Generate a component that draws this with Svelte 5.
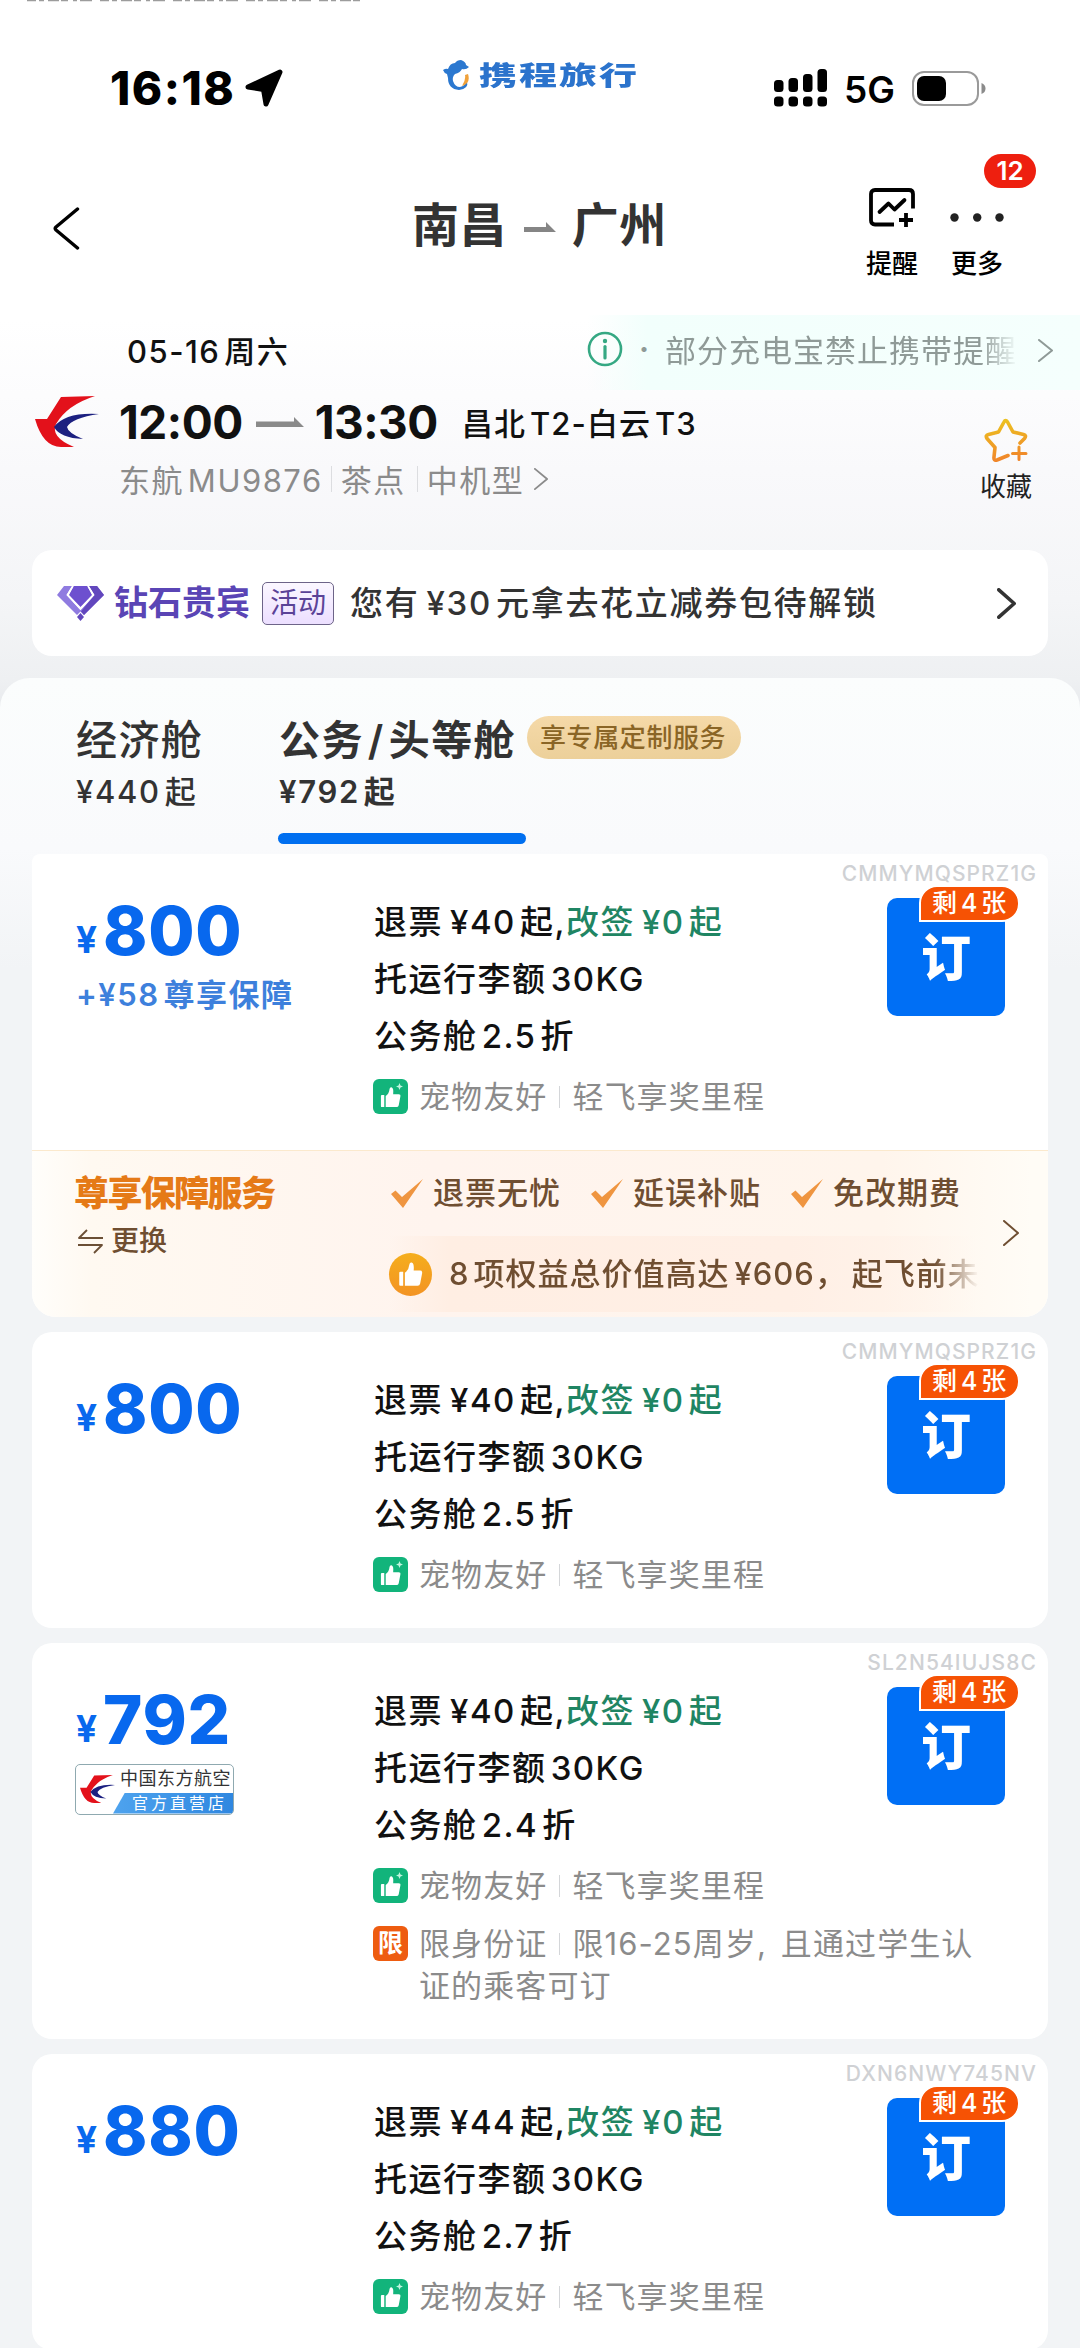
<script lang="ts">
  interface Fare {
    id: number;
    code: string;
    price: number;
    refund: number;
    discount: string;
    insured?: boolean;
    flagship?: boolean;
    restricted?: boolean;
  }

  const fares: Fare[] = [
    { id: 1, code: 'CMMYMQSPRZ1G', price: 800, refund: 40, discount: '2.5', insured: true },
    { id: 2, code: 'CMMYMQSPRZ1G', price: 800, refund: 40, discount: '2.5' },
    { id: 3, code: 'SL2N54IUJS8C', price: 792, refund: 40, discount: '2.4', flagship: true, restricted: true },
    { id: 4, code: 'DXN6NWY745NV', price: 880, refund: 44, discount: '2.7' },
  ];

  const cabins = [
    { key: 'economy', label: ['经济舱'], from: 440 },
    { key: 'business', label: ['公务', '头等舱'], from: 792, perk: '享专属定制服务' },
  ];

  const perks = ['退票无忧', '延误补贴', '免改期费'];

  let activeCabin = $state('business');
</script>

{#snippet chevron(w: number, h: number, stroke: number)}
  <svg width={w} height={h} viewBox="0 0 {w} {h}" fill="none" stroke="currentColor" stroke-width={stroke} stroke-linecap="round" stroke-linejoin="round">
    <path d="M{stroke / 2} {stroke / 2}L{w - stroke / 2} {h / 2}L{stroke / 2} {h - stroke / 2}" />
  </svg>
{/snippet}

{#snippet airline(w: number, h: number)}
  <svg width={w} height={h} viewBox="0 0 64 51">
    <path fill="#e3111b" d="M0 23H12L26 1L60 0Q32 9 21 28Q15 41 39 51H26Q8 51 0 23Z" />
    <path fill="#1c2080" d="M64 18Q30 16 19 31Q25 42 48 43Q33 37 32 31Q37 22 64 18Z" />
  </svg>
{/snippet}

{#snippet thumb(size: number)}
  <svg width={size} height={size} viewBox="0 0 24 24" fill="currentColor">
    <path d="M2 10.5Q2 9.500 3 9.500H5.500V22H3Q2 22 2 21ZM7 22V10.500Q10.500 8 11 3Q11.300 1 13 1.300Q15.500 2 14.800 8.500H20.500Q22.800 8.500 22.300 11L20.600 20Q20.200 22 18.300 22Z" />
  </svg>
{/snippet}

<div class="page">
  <svg class="cutoff" width="334" height="3" viewBox="0 0 334 3">
    <path d="M0 0.500H334" stroke="#9c9c9c" stroke-width="1.600" stroke-dasharray="9 3 5 4 11 2 7 5 4 3 12 8" />
  </svg>

  <div class="status">
    <div class="clock">
      16:18
      <svg width="38" height="38" viewBox="0 0 38 38">
        <path d="M35 3L21 35L18.500 20.500L3 18Z" fill="#000" stroke="#000" stroke-width="5" stroke-linejoin="round" />
      </svg>
    </div>
    <div class="brand">
      <svg width="27" height="30" viewBox="0 0 27 30">
        <path fill="#2b78d0" d="M0 10Q3 8 5 9Q7 3 12 3Q14 0 18 0Q23 2 23 5L26 7Q23 10 19 9Q17 13 12 14Q9 17 10 21Q12 27 17 27Q22 26 24 21Q26 29 16 30Q5 29 5 18L4 14Q1 13 0 10Z" />
        <path fill="#f0a13a" d="M25 14Q28 23 19 26Q23 20 22 15Z" />
      </svg>
      <span>携程旅行</span>
    </div>
    <div class="signal">
      <svg width="53" height="38" viewBox="0 0 53 38">
        <rect x="0" y="11" width="9.500" height="12" rx="3.500" />
        <rect x="14.500" y="9" width="9.500" height="14" rx="3.500" />
        <rect x="29" y="5" width="9.500" height="18" rx="3.500" />
        <rect x="43.500" y="0" width="9.500" height="23" rx="3.500" />
        <rect x="0" y="27.500" width="9.500" height="10" rx="3.500" />
        <rect x="14.500" y="27.500" width="9.500" height="10" rx="3.500" />
        <rect x="29" y="27.500" width="9.500" height="10" rx="3.500" />
        <rect x="43.500" y="27.500" width="9.500" height="10" rx="3.500" />
      </svg>
      <span>5G</span>
      <svg width="74" height="35" viewBox="0 0 74 35">
        <rect x="1" y="1" width="65" height="33" rx="11" fill="none" stroke="#9a9a9a" stroke-width="2" />
        <rect x="5" y="5" width="29" height="25" rx="7" />
        <path d="M69.500 12Q73.500 13.500 73.500 17.500T69.500 23Z" fill="#8b8b8b" />
      </svg>
    </div>
  </div>

  <div class="nav">
    <button class="back" aria-label="返回">
      <svg width="27" height="43" viewBox="0 0 27 43" fill="none" stroke="#000" stroke-width="3.400" stroke-linecap="round" stroke-linejoin="round">
        <path d="M24.500 2L3 20Q1.500 21.500 3 23L24.500 41" />
      </svg>
    </button>
    <div class="route">
      <span>南昌</span>
      <svg width="32" height="11" viewBox="0 0 32 11"><path d="M0 5H22V0L32 10H0Z" fill="#858585" /></svg>
      <span>广州</span>
    </div>
    <div class="actions">
      <button class="action">
        <svg width="46" height="40" viewBox="0 0 46 40" fill="none" stroke="#000" stroke-width="3.800">
          <path d="M25 36.500H6Q2 36.500 2 32.500V6Q2 2 6 2H40Q44 2 44 6V20.500" />
          <path d="M10.500 24L19.500 15.500L25.500 21.500L35.500 12" stroke-linecap="round" stroke-linejoin="round" />
          <path d="M37 25V39M30 32H44" />
        </svg>
        提醒
      </button>
      <button class="action">
        <svg width="54" height="40" viewBox="0 0 54 40" fill="#222">
          <circle cx="4.500" cy="29.500" r="4.200" />
          <circle cx="27.200" cy="29.500" r="4.200" />
          <circle cx="49.500" cy="29.500" r="4.200" />
        </svg>
        更多
        <span class="unread">12</span>
      </button>
    </div>
  </div>

  <div class="date-row">
    <span class="date">05-16周六</span>
    <div class="notice">
      <svg width="36" height="36" viewBox="0 0 36 36" fill="none" stroke="#35a883" stroke-width="2.600">
        <circle cx="18" cy="18" r="16" />
        <path d="M18 15.500V27" stroke-width="3.200" stroke-linecap="round" />
        <circle cx="18" cy="10" r="2.200" fill="#35a883" stroke="none" />
      </svg>
      <span class="bullet">·</span>
      <span class="notice-text">部分充电宝禁止携带提醒</span>
      {@render chevron(15, 23, 2)}
    </div>
  </div>

  <div class="flight">
    <div class="carrier">{@render airline(64, 51)}</div>
    <div class="flight-info">
      <div class="times">
        <b>12:00</b>
        <svg width="48" height="11" viewBox="0 0 48 11"><path d="M0 4.500H38V0L48 10H0Z" fill="#8a8a8a" /></svg>
        <b>13:30</b>
        <span class="airports">昌北T2-白云T3</span>
      </div>
      <div class="meta">
        <span>东航MU9876</span>
        <i></i>
        <span>茶点</span>
        <i></i>
        <span>中机型</span>
        {@render chevron(14, 22, 1.8)}
      </div>
    </div>
    <button class="favorite">
      <svg width="44" height="44" viewBox="0 0 44 44" fill="none" stroke="url(#gold)" stroke-width="3.600" stroke-linecap="round" stroke-linejoin="round">
        <defs>
          <linearGradient id="gold" gradientUnits="userSpaceOnUse" x1="0" y1="0" x2="6" y2="44">
            <stop offset="0" stop-color="#ecc81f" />
            <stop offset="1" stop-color="#f0862a" />
          </linearGradient>
        </defs>
        <path d="M24 37.500L13 42Q9.500 43 10 39L11 29.500L3 20.500Q1 17.500 4.500 16.500L14.500 14L20 4Q21.500 1 23.500 4L29 14L39.500 16.500Q43 17.500 40.500 20.500L36 25" />
        <path d="M35 29V41.500M28.500 35.500H42" stroke-width="3" />
      </svg>
      收藏
    </button>
  </div>

  <div class="vip">
    <svg width="47" height="35" viewBox="0 0 47 35">
      <path fill="#8f7be0" d="M7 0H15L9.500 9L23.500 24L37.500 9L32 0H40L47 9L27 29L23.500 25.500L20 29L0 9Z" />
      <path fill="#6d50cf" d="M16.500 0H30.500L35 9L23.500 21L12 9Z" />
      <path fill="#6247bd" d="M37.500 9L32 0H40L47 9L27 29L24 25.500ZM23.500 27L27 31L23.500 35L20 31Z" />
      <path fill="none" stroke="#fff" stroke-width="1.600" d="M16 0L10.500 9L23.500 23L36.500 9L31 0" />
    </svg>
    <b>钻石贵宾</b>
    <span class="vip-tag">活动</span>
    <span class="vip-text">您有<span class="yen">¥</span>30元拿去花立减券包待解锁</span>
    {@render chevron(19, 31, 3.6)}
  </div>

  <div class="sheet">
    <div class="cabins">
      {#each cabins as cabin (cabin.key)}
        <button class="cabin" class:active={activeCabin === cabin.key} onclick={() => (activeCabin = cabin.key)}>
          <span class="cabin-name">{cabin.label[0]}{#if cabin.label[1]}<span class="slash">/</span>{cabin.label[1]}{/if}</span>
          <span class="cabin-price">¥{cabin.from}起</span>
        </button>
        {#if cabin.perk}
          <span class="perk-pill">{cabin.perk}</span>
        {/if}
      {/each}
    </div>

    <div class="fares">
      {#each fares as fare (fare.id)}
        <div class="card" class:first={fare.insured}>
          <div class="fare">
            <div class="price-col">
              <div class="price"><small>¥</small>{fare.price}</div>
              {#if fare.insured}
                <div class="extra">+¥58尊享保障</div>
              {/if}
              {#if fare.flagship}
                <div class="store">
                  {@render airline(35, 30)}
                  <div class="store-text">
                    <span>中国东方航空</span>
                    <span class="store-sub">官方直营店</span>
                  </div>
                </div>
              {/if}
            </div>

            <div class="rules">
              <div class="rule">退票<span class="yen">¥</span>{fare.refund}起,<em>改签<span class="yen">¥</span>0起</em></div>
              <div class="rule">托运行李额30KG</div>
              <div class="rule">公务舱{fare.discount}折</div>
              <div class="tag-row">
                <span class="icon-tag">
                  {@render thumb(23)}
                  <svg class="spark" width="7" height="7" viewBox="0 0 7 7"><path d="M3.500 0L4.500 2.500L7 3.500L4.500 4.500L3.500 7L2.500 4.500L0 3.500L2.500 2.500Z" fill="#bff5df" /></svg>
                </span>
                <span class="tag-text">宠物友好<i></i>轻飞享奖里程</span>
              </div>
              {#if fare.restricted}
                <div class="tag-row limit-row">
                  <span class="icon-tag limit">限</span>
                  <span class="tag-text">限身份证<i></i>限16-25周岁, 且通过学生认证的乘客可订</span>
                </div>
              {/if}
            </div>

            <span class="code">{fare.code}</span>
            <button class="book">
              订
              <span class="left">剩4张</span>
            </button>
          </div>

          {#if fare.insured}
            <div class="insurance">
              <div class="ins-name">
                <b>尊享保障服务</b>
                <span class="swap">
                  <svg width="25" height="25" viewBox="0 0 25 25" fill="none" stroke="#6b4f35" stroke-width="1.800" stroke-linejoin="round">
                    <path d="M25 9H1L9 1M0 16H24L16 24" />
                  </svg>
                  更换
                </span>
              </div>
              <div class="ins-detail">
                <div class="ins-perks">
                  {#each perks as perk (perk)}
                    <span class="ins-perk">
                      <svg width="32" height="29" viewBox="0 0 32 29"><path d="M0 15L4.500 11.500L11 18L32 0L12 29Z" fill="#ef9540" /></svg>
                      {perk}
                    </span>
                  {/each}
                </div>
                <div class="ins-banner">
                  <span class="like">{@render thumb(27)}</span>
                  <span class="ins-text">8项权益总价值高达<span class="yen">¥</span>606<span class="comma">，</span>起飞前未</span>
                </div>
              </div>
              <span class="ins-more">{@render chevron(16, 26, 2)}</span>
            </div>
          {/if}
        </div>
      {/each}
    </div>
  </div>
</div>

<style>
  :global(body) {
    margin: 0;
    background: #fff;
  }

  .page {
    position: relative;
    width: 1080px;
    height: 2348px;
    overflow: hidden;
    display: flex;
    flex-direction: column;
    background: linear-gradient(#fff 0, #fff 320px, #f9f9fb 470px, #f4f5f7 600px, #eef0f2 680px, #e6e8ec 720px, #f2f4f6 760px);
    font-family: Inter, 'Noto Sans CJK SC', sans-serif;
    color: #111;
    text-autospace: normal;
    white-space: nowrap;
  }

  button {
    border: none;
    padding: 0;
    background: none;
    font: inherit;
    color: inherit;
    letter-spacing: inherit;
    text-autospace: inherit;
    cursor: pointer;
  }

  svg {
    display: block;
    flex: none;
  }

  em,
  i {
    font-style: normal;
  }

  .yen {
    margin-left: 7px;
  }

  .cutoff {
    position: absolute;
    top: 0;
    left: 27px;
  }

  /* status bar */
  .status {
    height: 176px;
    flex: none;
    display: grid;
    grid-template-columns: 443px 1fr 306px;
    align-items: center;
  }

  .clock {
    display: flex;
    align-items: center;
    gap: 10px;
    padding-left: 110px;
    font-size: 46px;
    font-weight: 800;
    letter-spacing: 1.5px;
    color: #000;
  }

  .brand {
    display: flex;
    align-items: center;
    gap: 9px;
    margin-top: -26px;
    color: #2b73cc;
  }

  .brand span {
    font-size: 38px;
    line-height: 30px;
    font-weight: 900;
    letter-spacing: 2px;
    transform: scaleY(0.7);
  }

  .signal {
    display: flex;
    align-items: center;
  }

  .signal span {
    margin: 2px 17px 0 17px;
    font-size: 37px;
    font-weight: 600;
    color: #000;
  }

  /* title bar */
  .nav {
    height: 100px;
    flex: none;
    display: grid;
    grid-template-columns: 412px 1fr 218px;
    align-items: center;
  }

  .back {
    padding-left: 53px;
    justify-self: start;
  }

  .route {
    display: flex;
    align-items: center;
    gap: 16px;
    margin-top: -7px;
    font-size: 47px;
    line-height: 50px;
    font-weight: 700;
    letter-spacing: 0.4px;
    color: #333;
  }

  .route svg {
    margin: 6px 0 0 1px;
  }

  .actions {
    display: flex;
    align-self: start;
    gap: 32px;
    padding: 12px 0 0 4px;
  }

  .action {
    position: relative;
    display: flex;
    flex-direction: column;
    align-items: center;
    gap: 20px;
    font-size: 26px;
    line-height: 32px;
    font-weight: 500;
    color: #000;
  }

  .unread {
    position: absolute;
    top: -34px;
    left: 34px;
    width: 52px;
    height: 34px;
    border-radius: 17px;
    background: #ee1f0f;
    color: #fff;
    font-size: 26px;
    line-height: 34px;
    font-weight: 600;
    text-align: center;
  }

  /* flight summary */
  .date-row {
    height: 75px;
    flex: none;
    margin-top: 39px;
    display: flex;
    align-items: center;
    justify-content: space-between;
    padding-left: 127px;
  }

  .date {
    margin-top: -6px;
    font-size: 31px;
    font-weight: 500;
    letter-spacing: 1.5px;
  }

  .notice {
    width: 493px;
    height: 75px;
    box-sizing: border-box;
    padding-bottom: 8px;
    display: flex;
    align-items: center;
    color: #8f9a97;
    background: linear-gradient(90deg, #f4fffc00 0, #f2fffc 60px, #f5fffd 100%);
  }

  .notice svg:last-child {
    margin: 4px 0 0 20px;
  }

  .bullet {
    width: 42px;
    text-align: center;
    font-size: 30px;
    font-weight: 700;
  }

  .notice-text {
    width: 353px;
    overflow: hidden;
    font-size: 31px;
    letter-spacing: 1px;
    mask-image: linear-gradient(90deg, #000 315px, transparent 353px);
  }

  .flight {
    height: 117px;
    flex: none;
    display: flex;
    padding-right: 48px;
  }

  .carrier {
    width: 119px;
    padding: 6px 0 0 35px;
    box-sizing: border-box;
  }

  .flight-info {
    flex: 1;
  }

  .times {
    height: 63px;
    display: flex;
    align-items: center;
  }

  .times b {
    font-size: 46px;
    font-weight: 700;
    letter-spacing: -0.5px;
  }

  .times svg {
    margin: 2px 11px 0 13px;
  }

  .airports {
    margin: -1px 0 0 24px;
    font-size: 31px;
    font-weight: 500;
    letter-spacing: 1.1px;
  }

  .meta {
    height: 51px;
    display: flex;
    align-items: center;
    font-size: 31px;
    letter-spacing: 1.5px;
    color: #8b8b8b;
  }

  .meta i {
    width: 1px;
    height: 26px;
    margin: 0 9px 0 8px;
    background: #dcdde0;
  }

  .meta i + span + i {
    margin-left: 11px;
  }

  .meta svg {
    margin-left: 10px;
  }

  .favorite {
    display: flex;
    flex-direction: column;
    align-items: center;
    align-self: flex-start;
    gap: 9px;
    padding-top: 28px;
    font-size: 26px;
    line-height: 32px;
    color: #222;
  }

  /* member banner */
  .vip {
    height: 106px;
    flex: none;
    margin: 43px 32px 22px;
    padding: 0 32px 0 25px;
    display: flex;
    align-items: center;
    border-radius: 20px;
    background: #fff;
    color: #333;
    line-height: 44px;
  }

  .vip b {
    margin: -1px 0 0 10px;
    font-size: 34px;
    font-weight: 700;
    color: #5a45b5;
  }

  .vip-tag {
    height: 41px;
    margin: 0 16px 0 12px;
    padding: 0 7px;
    border: 1px solid #6d6488;
    border-radius: 5px;
    background: linear-gradient(#fbf7ff, #ecdfff);
    font-size: 28px;
    line-height: 40px;
    color: #5b4397;
  }

  .vip-text {
    flex: 1;
    font-size: 33px;
    font-weight: 500;
    letter-spacing: 1.7px;
  }

  /* cabin tabs */
  .sheet {
    flex: 1;
    display: flex;
    flex-direction: column;
    border-radius: 30px 30px 0 0;
    background: linear-gradient(#fbfdfd 0, #f9fafc 170px, #f2f4f6 290px);
  }

  .cabins {
    height: 176px;
    flex: none;
    display: flex;
    padding-left: 76px;
    box-sizing: border-box;
  }

  .cabin {
    position: relative;
    display: flex;
    flex-direction: column;
    align-items: flex-start;
    width: 202px;
    padding-top: 37px;
    color: #333;
    font-weight: 500;
  }

  .cabin-name {
    font-size: 41px;
    line-height: 50px;
    letter-spacing: 1.4px;
  }

  .slash {
    margin: 0 4px;
  }

  .cabin-price {
    margin-top: 6px;
    font-size: 31px;
    line-height: 42px;
    letter-spacing: 1.7px;
  }

  .cabin.active {
    width: 249px;
    padding-left: 1px;
    font-weight: 600;
  }

  .cabin.active::after {
    content: '';
    position: absolute;
    left: 0;
    bottom: 10px;
    width: 248px;
    height: 11px;
    border-radius: 6px;
    background: #006ff0;
  }

  .perk-pill {
    height: 43px;
    margin-top: 38px;
    padding: 0 15px 0 13px;
    border-radius: 22px;
    background: linear-gradient(#f5d9a8, #ecd09a);
    font-size: 26px;
    line-height: 43px;
    font-weight: 500;
    letter-spacing: 0.6px;
    color: #8a6526;
  }

  /* fare cards */
  .fares {
    display: flex;
    flex-direction: column;
    gap: 15px;
    padding: 0 32px;
  }

  .card {
    border-radius: 20px;
    background: #fff;
    overflow: hidden;
  }

  .card.first {
    border-radius: 8px 8px 24px 24px;
  }

  .fare {
    position: relative;
    display: grid;
    grid-template-columns: 298px 604px;
    padding: 39.5px 0 32px 44px;
  }

  .price {
    display: flex;
    align-items: baseline;
    font-size: 67px;
    line-height: 73px;
    font-weight: 800;
    letter-spacing: 0.8px;
    color: #0868ee;
  }

  .price small {
    position: relative;
    top: -2px;
    margin-right: 5px;
    font-size: 37px;
    font-weight: 700;
  }

  .extra {
    margin-top: -3px;
    font-size: 31px;
    line-height: 40px;
    font-weight: 600;
    letter-spacing: 1.5px;
    color: #3d80dc;
  }

  .store {
    display: flex;
    align-items: center;
    width: 159px;
    height: 51px;
    margin: -3px 0 0 -1px;
    padding-left: 4px;
    box-sizing: border-box;
    border: 1px solid #8fa9b0;
    border-radius: 5px;
    overflow: hidden;
  }

  .store-text {
    flex: 1;
    height: 100%;
    display: flex;
    flex-direction: column;
    margin-left: -3px;
    padding-left: 1px;
    text-align: right;
    font-size: 18px;
    line-height: 28px;
    color: #333;
    letter-spacing: 0.5px;
  }

  .store-text > span:first-child {
    padding-right: 2px;
  }

  .store-text .store-sub {
    flex: 1;
    padding-right: 6px;
    background: linear-gradient(90deg, #4ea3ee, #2f87e0);
    clip-path: polygon(12px 0, 100% 0, 100% 100%, 0 100%);
    font-size: 16px;
    line-height: 21px;
    letter-spacing: 3px;
    color: #fff;
  }

  .rule {
    font-size: 33px;
    line-height: 57px;
    font-weight: 500;
    letter-spacing: 1.5px;
  }

  .rule em {
    color: #1f8563;
  }

  .tag-row {
    display: flex;
    align-items: flex-start;
    margin-top: 11.5px;
  }

  .limit-row {
    margin-top: 16px;
    text-autospace: no-autospace;
    word-spacing: 4px;
  }

  .icon-tag {
    position: relative;
    display: flex;
    align-items: center;
    justify-content: center;
    flex: none;
    width: 35px;
    height: 35px;
    margin: 3px 11px 0 -1px;
    border-radius: 6px;
    background: #12b47b;
    color: #fff;
  }

  .icon-tag svg:first-child {
    margin: 2px 1px 0 0;
  }

  .icon-tag .spark {
    position: absolute;
    top: 4px;
    right: 5px;
  }

  .icon-tag.limit {
    background: #ee5c10;
    font-size: 25px;
    line-height: 33px;
    font-weight: 700;
  }

  .tag-text {
    white-space: normal;
    font-size: 31px;
    line-height: 42px;
    letter-spacing: 1.1px;
    color: #8b8b8b;
  }

  .tag-text i {
    display: inline-block;
    width: 1px;
    height: 22px;
    margin: 0 12px 0 12px;
    background: #d4d6d9;
  }

  .code {
    position: absolute;
    top: 7px;
    right: 11px;
    font-size: 21px;
    line-height: 26px;
    font-weight: 500;
    letter-spacing: 1.1px;
    color: #cfd1d4;
  }

  .book {
    position: absolute;
    top: 43.5px;
    right: 43px;
    width: 118px;
    height: 118px;
    border-radius: 10px;
    background: #006ff5;
    color: #fff;
    font-size: 50px;
    line-height: 120px;
    font-weight: 900;
    text-align: center;
  }

  .left {
    position: absolute;
    top: -13px;
    left: 32px;
    width: 97px;
    height: 33px;
    border: 2px solid #fff;
    border-radius: 18px 18px 18px 0;
    background: #f65204;
    font-size: 25px;
    line-height: 33px;
    font-weight: 500;
    letter-spacing: 0.8px;
  }

  /* insurance upsell */
  .insurance {
    height: 167px;
    display: flex;
    box-sizing: border-box;
    border-top: 1px solid #fbe9cd;
    background: linear-gradient(90deg, #fffefb 0, #fff9f1 60px, #fff4ee 400px, #fff5ec 850px, #fffcf6 1000px);
    color: #6f4e31;
  }

  .ins-name {
    width: 357px;
    padding: 22px 0 0 42px;
    box-sizing: border-box;
  }

  .ins-name b {
    display: block;
    font-size: 35px;
    line-height: 40px;
    font-weight: 900;
    letter-spacing: -1.6px;
    color: #e57a17;
  }

  .swap {
    display: flex;
    align-items: center;
    gap: 8px;
    margin: 8px 0 0 4px;
    font-size: 28px;
    line-height: 40px;
    font-weight: 500;
  }

  .ins-detail {
    width: 588px;
    font-size: 31px;
    line-height: 42px;
    font-weight: 500;
    letter-spacing: 1px;
  }

  .ins-perks {
    display: flex;
    gap: 30px;
    height: 85px;
    padding: 21px 0 0 2px;
    box-sizing: border-box;
  }

  .ins-perk {
    display: flex;
    align-items: center;
    gap: 10px;
    height: 42px;
  }

  .ins-banner {
    display: flex;
    align-items: center;
    height: 76px;
    background: linear-gradient(90deg, #ffefe500 0, #ffeee3 60px, #ffefe5 400px, #fff4ea00 588px);
  }

  .like {
    display: flex;
    align-items: center;
    justify-content: center;
    flex: none;
    width: 43px;
    height: 43px;
    border-radius: 50%;
    background: linear-gradient(#f5ae1c, #f39324);
    color: #fff;
  }

  .ins-text {
    margin-left: 17px;
    mask-image: linear-gradient(90deg, #000 485px, transparent 530px);
  }

  .ins-text .yen {
    margin-left: 5px;
  }

  .comma {
    margin-right: 5px;
  }

  .ins-more {
    margin: 69px 0 0 26px;
  }
</style>
